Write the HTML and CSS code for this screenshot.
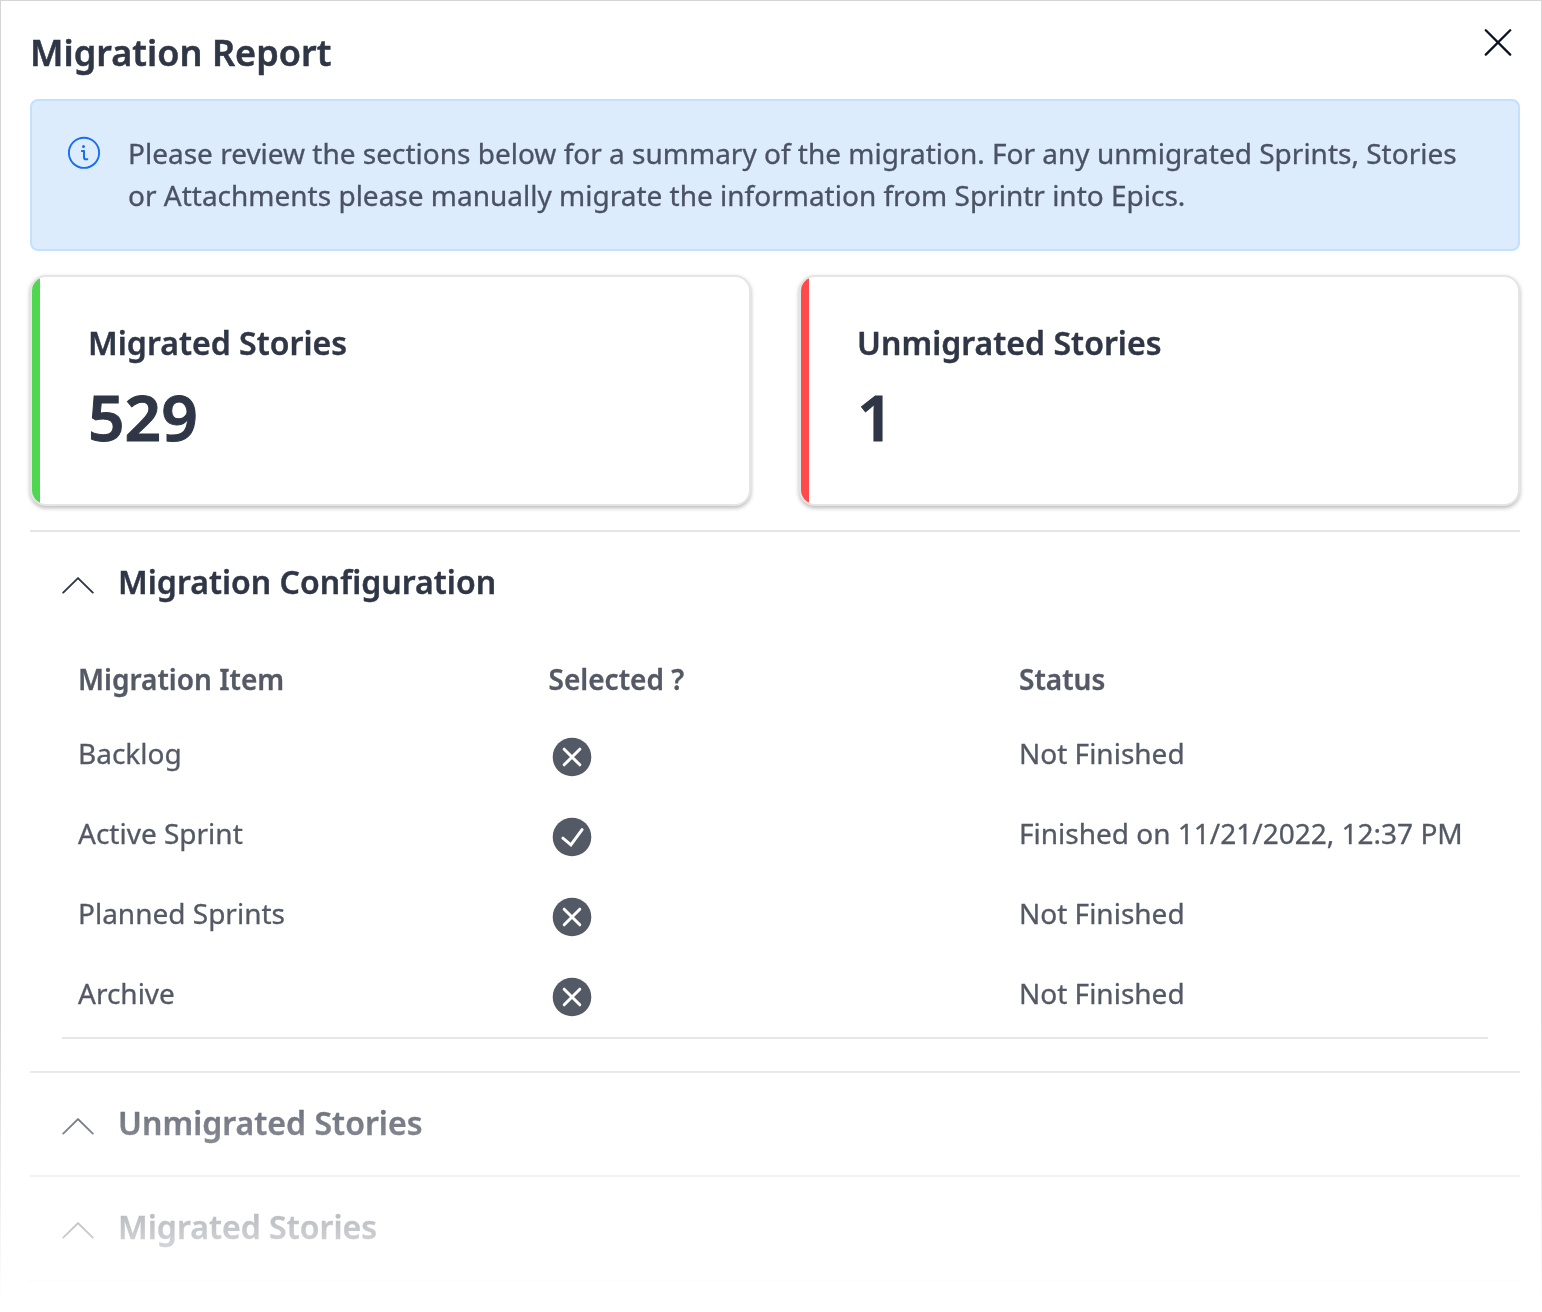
FILE: index.html
```html
<!DOCTYPE html>
<html lang="en">
<head>
<meta charset="utf-8">
<title>Migration Report</title>
<link rel="stylesheet" href="styles.css">
</head>
<body>
<svg class="sprite" aria-hidden="true">
  <symbol id="chevron" viewBox="0 0 32 20"><path d="M1.2 17.6 16 3.1l14.8 14.5" fill="none" stroke="currentColor" stroke-width="1.9" stroke-linejoin="round" stroke-linecap="round"/></symbol>
  <symbol id="no" viewBox="0 0 40 40"><circle cx="20" cy="20" r="19.3" fill="currentColor"/><path d="m12.2 12.2 15.6 15.6m0-15.6L12.2 27.8" stroke="#fff" stroke-width="3" stroke-linecap="round"/></symbol>
  <symbol id="yes" viewBox="0 0 40 40"><circle cx="20" cy="20" r="19.3" fill="currentColor"/><path d="m10.9 21.2 8 6.6 11.2-15.2" fill="none" stroke="#fff" stroke-width="3" stroke-linecap="round" stroke-linejoin="miter"/></symbol>
</svg>
<main class="panel">
  <header class="panel-header">
    <h1 class="title">Migration Report</h1>
    <button class="close" aria-label="Close"><svg width="28" height="28" viewBox="0 0 28 28"><path d="m1.8 2.2 24.4 24.4m0-24.4L1.8 26.6" stroke="currentColor" stroke-width="2.3" stroke-linecap="round"/></svg></button>
  </header>
  <section class="notice">
    <svg class="notice-icon" width="34" height="34" viewBox="0 0 34 34" fill="none" stroke="currentColor"><circle cx="17" cy="16.8" r="15.1" stroke-width="1.9"/><path d="M14.9 15h2.1v6.4q0 1.8 1.7 1.8h1.6" stroke-width="2" stroke-linecap="round" stroke-linejoin="round"/><circle cx="16.5" cy="10.6" r="1.5" fill="currentColor" stroke="none"/></svg>
    <p class="notice-text">Please review the sections below for a summary of the migration. For any unmigrated Sprints, Stories or Attachments please manually migrate the information from Sprintr into Epics.</p>
  </section>
  <section class="cards">
    <article class="card card-success"><div class="card-body"><h2 class="heading">Migrated Stories</h2><p class="count">529</p></div></article>
    <article class="card card-danger"><div class="card-body"><h2 class="heading">Unmigrated Stories</h2><p class="count">1</p></div></article>
  </section>
  <section class="group">
    <div class="group-header"><svg class="chevron"><use href="#chevron"/></svg><h2 class="heading">Migration Configuration</h2></div>
    <div class="table">
      <div class="row row-head"><span>Migration Item</span><span>Selected ?</span><span>Status</span></div>
      <div class="row"><span>Backlog</span><span class="mark"><svg class="mark-icon"><use href="#no"/></svg></span><span>Not Finished</span></div>
      <div class="row"><span>Active Sprint</span><span class="mark"><svg class="mark-icon"><use href="#yes"/></svg></span><span>Finished on 11/21/2022, 12:37 PM</span></div>
      <div class="row"><span>Planned Sprints</span><span class="mark"><svg class="mark-icon"><use href="#no"/></svg></span><span>Not Finished</span></div>
      <div class="row"><span>Archive</span><span class="mark"><svg class="mark-icon"><use href="#no"/></svg></span><span>Not Finished</span></div>
    </div>
  </section>
  <section class="group"><div class="group-header"><svg class="chevron"><use href="#chevron"/></svg><h2 class="heading">Unmigrated Stories</h2></div></section>
  <section class="group group-last"><div class="group-header"><svg class="chevron"><use href="#chevron"/></svg><h2 class="heading">Migrated Stories</h2></div></section>
</main>
</body>
</html>
```
FILE: styles.css
```css
* { box-sizing: border-box; }
body { margin: 0; background: #fff; font-family: "Noto Sans", sans-serif; font-size: 28px; line-height: 42px; color: #535965; -webkit-text-stroke: .3px; }
h1, h2, p { margin: 0; }
.sprite { display: none; }
.panel {
  height: 1312px;
  padding: 0 21px 0 29px;
  border: 1px solid #d5d5d5;
  border-bottom: 0;
  overflow: hidden;
  -webkit-mask-image: linear-gradient(#000 1022px, transparent 1308px);
  mask-image: linear-gradient(#000 1022px, transparent 1308px);
}
.panel-header { display: flex; justify-content: space-between; height: 98px; padding-top: 27px; }
.title { font-size: 36px; line-height: 50px; font-weight: 600; letter-spacing: .04px; color: #2f3646; -webkit-text-stroke: .5px; }
.close { width: 28px; height: 28px; margin: 0 8px 0 0; padding: 0; border: 0; background: none; color: #0a1325; }
.close svg { display: block; }
.notice { display: flex; gap: 27px; height: 152px; padding: 31px 36px 0 35px; border: 2px solid #c2e0ff; border-radius: 8px; background: #dcecfd; }
.notice-icon { flex: none; margin-top: 4px; color: #146ff5; }
.notice-text { color: #4a5263; }
.cards { display: grid; grid-template-columns: 1fr 1fr; gap: 48px; margin: 24px 0; }
.card { height: 231px; border: 2px solid #e5e5e5; border-radius: 16px; background: #fff; overflow: hidden; box-shadow: 0 2px 4px rgba(0, 0, 0, .28); }
.card-body { height: 100%; padding: 44px 48px; border-left: 8px solid; }
.card-success .card-body { border-color: #4fd84f; }
.card-danger .card-body { border-color: #ff4a4b; }
.heading { font-size: 32px; line-height: 44px; font-weight: 600; letter-spacing: .03px; color: #2f3646; -webkit-text-stroke: .4px; }
.count { margin-top: 8px; font-size: 64px; line-height: 88px; font-weight: 600; color: #2f3646; -webkit-text-stroke: 1px; }
.group { border-top: 2px solid #e5e5e5; }
.group-last { border-bottom: 2px solid #e5e5e5; height: 107px; }
.group-header { display: flex; align-items: center; gap: 24px; height: 102px; padding: 0 32px 2px; color: #2f3646; }
.chevron { width: 32px; height: 20px; margin-top: 6px; }
.table { margin: 7px 32px 32px; padding-left: 16px; border-bottom: 2px solid #e5e5e5; }
.row { display: grid; grid-template-columns: 470.5px 470.5px 1fr; height: 80px; padding-top: 15px; white-space: nowrap; }
.row-head { height: 76px; padding-top: 17px; font-weight: 600; }
.mark { padding: 5.3px 0 0 4px; }
.mark-icon { display: block; width: 40px; height: 40px; margin-left: -.2px; }
```
